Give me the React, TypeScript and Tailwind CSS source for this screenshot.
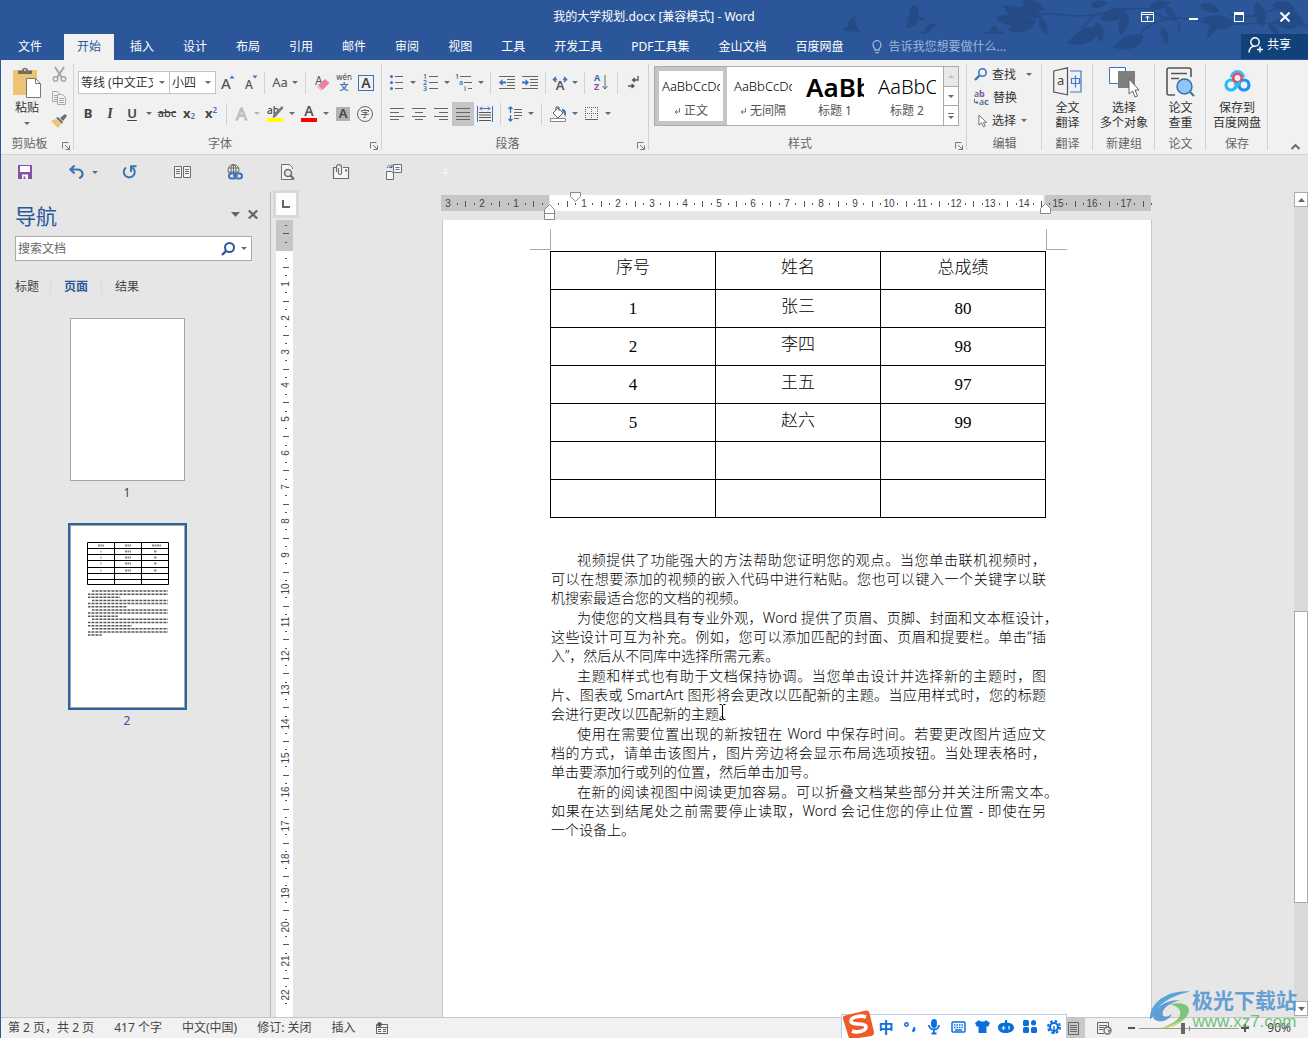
import React from 'react'
import clsx from 'clsx'

type Props = { className?: string; children?: React.ReactNode }

const tabs = ['开始', '插入', '设计', '布局', '引用', '邮件', '审阅', '视图', '工具', '开发工具', 'PDF工具集', '金山文档', '百度网盘']

const header = ['序号', '姓名', '总成绩']
const rows = [
  ['1', '张三', '80'],
  ['2', '李四', '98'],
  ['4', '王五', '97'],
  ['5', '赵六', '99'],
  ['', '', ''],
  ['', '', ''],
]

const paragraphs = [
  ['视频提供了功能强大的方法帮助您证明您的观点。当您单击联机视频时，', '可以在想要添加的视频的嵌入代码中进行粘贴。您也可以键入一个关键字以联', '机搜索最适合您的文档的视频。'],
  ['为使您的文档具有专业外观，Word 提供了页眉、页脚、封面和文本框设计，', '这些设计可互为补充。例如，您可以添加匹配的封面、页眉和提要栏。单击“插', '入”，然后从不同库中选择所需元素。'],
  ['主题和样式也有助于文档保持协调。当您单击设计并选择新的主题时，图', '片、图表或 SmartArt 图形将会更改以匹配新的主题。当应用样式时，您的标题', '会进行更改以匹配新的主题。'],
  ['使用在需要位置出现的新按钮在 Word 中保存时间。若要更改图片适应文', '档的方式，请单击该图片，图片旁边将会显示布局选项按钮。当处理表格时，', '单击要添加行或列的位置，然后单击加号。'],
  ['在新的阅读视图中阅读更加容易。可以折叠文档某些部分并关注所需文本。', '如果在达到结尾处之前需要停止读取，Word 会记住您的停止位置 - 即使在另', '一个设备上。'],
]

const Caret = ({ className = 'text-[#6a6a6a]' }: Props) => (
  <svg width="6" height="3" viewBox="0 0 6 3" className={clsx('shrink-0', className)}>
    <path d="M0 0h6L3 3z" fill="currentColor" />
  </svg>
)

const Tool = ({ className, children, label }: Props & { label: string }) => (
  <button aria-label={label} className={clsx('flex h-6 shrink-0 items-center justify-center', className)}>
    {children}
  </button>
)

const More = ({ className = 'w-2.5' }: Props) => (
  <Tool label="更多" className={className}>
    <Caret />
  </Tool>
)

const Sep = ({ className = 'mx-1' }: Props) => <div className={clsx('h-[22px] w-px shrink-0 bg-[#d2d2d2]', className)} />

const Launcher = () => (
  <button aria-label="更多选项" className="absolute right-1 bottom-1">
    <svg width="8" height="8" viewBox="0 0 8 8" fill="none" stroke="#777">
      <path d="M.5 6.5v-6h6M3 3l4 4M7.5 3.5v4h-4" />
    </svg>
  </button>
)

const Group = ({ title, className, launcher, children }: Props & { title: string; launcher?: boolean }) => (
  <section className={clsx('relative flex shrink-0 flex-col justify-between', className)}>
    <div className="absolute top-1 right-0 bottom-1 w-px bg-[#d2d2d2]" />
    {children}
    <div className="h-5 text-center leading-5 text-[#666]">{title}</div>
    {launcher && <Launcher />}
  </section>
)

const Leaf = ({ x, y, r, s = 1 }: { x: number; y: number; r: number; s?: number }) => (
  <path d="M0 0C6-9 20-9 30 0C20 6 8 8 0 0z" transform={`translate(${x} ${y}) rotate(${r}) scale(${s})`} />
)

const TitleArt = () => (
  <svg width="480" height="60" viewBox="828 0 480 60" className="absolute top-0 right-0" fill="#244b85" aria-hidden="true">
    <path d="M856 15c-6 3-9 8-8 12l-5 1c3 3 8 5 12 3l6 1-4-4c-2-4-2-9-1-13z" />
    <path d="M914 5c-5 3-5 8-5 12l-4-1c1 2 2 3 4 3l-3 9c6 0 10-1 12-8 3 0 6 1 8-1l-8-3c1-5 0-10-4-11zM921 34c1-2 4-3 4-6 3-5 8-4 13-4l-6 5c-1 4-5 5-11 5z" />
    <path d="M985 34h19v-2l-6-1c1-4-3-6-6-4-3 2 0 5-7 5z" />
    <g stroke="#244b85" strokeWidth="1.5" fill="none">
      <path d="M1030 16c25-6 40 3 62-1s30-8 62-6M1140 34c14-16 40-20 62-12s60-4 106 4M1180 22l-2 12M1095 14l-12 14" />
      <path d="M1230 14c24 8 40-4 60-12M1150 9c8 8 20 10 28 12" />
    </g>
    <Leaf x={1035} y={13} r={185} s={1} />
    <Leaf x={1042} y={17} r={205} s={0.7} />
    <Leaf x={1022} y={20} r={185} s={0.9} />
    <Leaf x={1036} y={20} r={160} s={1} />
    <Leaf x={1020} y={12} r={200} s={0.6} />
    <Leaf x={1022} y={2} r={20} s={0.8} />
    <Leaf x={1040} y={18} r={70} s={0.6} />
    <Leaf x={1030} y={4} r={65} s={0.5} />
    <Leaf x={1100} y={28} r={155} s={1.2} />
    <Leaf x={1096} y={22} r={75} s={0.7} />
    <Leaf x={1127} y={9} r={160} s={1} />
    <Leaf x={1126} y={12} r={105} s={0.8} />
    <Leaf x={1090} y={6} r={-10} s={0.6} />
    <Leaf x={1144} y={36} r={160} s={1.1} />
    <Leaf x={1162} y={27} r={75} s={0.6} />
    <Leaf x={1150} y={8} r={-15} s={0.7} />
    <Leaf x={1166} y={6} r={60} s={0.6} />
    <Leaf x={1234} y={24} r={190} s={1.1} />
    <Leaf x={1216} y={22} r={120} s={0.6} />
    <Leaf x={1256} y={2} r={75} s={0.9} />
    <Leaf x={1268} y={24} r={45} s={0.5} />
    <Leaf x={1300} y={24} r={185} s={0.9} />
    <Leaf x={1272} y={5} r={10} s={0.8} />
    <Leaf x={1284} y={10} r={35} s={0.8} />
    <Leaf x={1200} y={5} r={20} s={0.7} />
  </svg>
)

const TitleBar = () => (
  <header className="relative flex h-15 shrink-0 flex-col bg-[#2b579a] text-white">
    <TitleArt />
    <div className="relative flex h-[34px] items-center">
      <div className="flex-1" />
      <h1>我的大学规划.docx [兼容模式] - Word</h1>
      <div className="flex flex-1 justify-end">
        <button aria-label="功能区显示选项" className="flex h-8 w-[46px] items-center justify-center">
          <svg width="13" height="10" viewBox="0 0 13 10" fill="none" stroke="white">
            <path d="M.5.5h12v9H.5zM.5 2.5h12M6.5 8.500V4M4.500 6l2-2 2 2" />
          </svg>
        </button>
        <button aria-label="最小化" className="flex h-8 w-[46px] items-center justify-center">
          <div className="mt-1 h-[2px] w-[9px] bg-white" />
        </button>
        <button aria-label="最大化" className="flex h-8 w-[46px] items-center justify-center">
          <div className="h-[10px] w-[10px] border border-t-[3px] border-white" />
        </button>
        <button aria-label="关闭" className="flex h-8 w-[46px] items-center justify-center">
          <svg width="10" height="10" viewBox="0 0 10 10" stroke="white" strokeWidth="2">
            <path d="M.5.5l9 9M9.500.5l-9 9" />
          </svg>
        </button>
      </div>
    </div>
    <nav className="relative flex h-[26px]">
      <button className="mr-[9px] ml-[5px] px-[13px] pb-px">文件</button>
      <div className="flex gap-[3px]">
        {tabs.map((tab, i) => (
          <button key={tab} className={clsx('px-[13px] pb-px', i === 0 && 'bg-[#f1f1f1] text-[#2b579a]')}>
            {tab}
          </button>
        ))}
      </div>
      <label className="ml-4 flex flex-1 items-center gap-1.5 text-[#9fb5d6]">
        <svg width="10" height="14" viewBox="0 0 10 14" fill="none" stroke="currentColor" strokeWidth="1.3">
          <path d="M3 10C3 8 1 7.500 1 4.700a4 4 0 0 1 8 0C9 7.500 7 8 7 10zM3.200 12.700h3.600" />
        </svg>
        <input placeholder="告诉我您想要做什么..." className="w-40 bg-transparent placeholder:text-[#9fb5d6]" />
      </label>
      <button className="flex h-[25px] w-[67px] items-center gap-1 bg-[#124078] pb-1 pl-[7px]">
        <svg width="15" height="16" viewBox="0 0 15 16" fill="none" stroke="white" strokeWidth="1.4">
          <circle cx="7" cy="5" r="4.200" />
          <path d="M1 15.500c.3-4 2.500-6 5-6.300M12 9.500v6M9 12.500h6" />
        </svg>
        共享
      </button>
    </nav>
  </header>
)

const Clipboard = () => (
  <Group title="剪贴板" launcher className="w-[73px] [&>div:nth-last-child(2)]:pr-4">
    <div className="flex gap-2 pt-[7px] pl-[10px]">
      <button className="flex w-8 flex-col items-center">
        <svg width="30" height="31" viewBox="0 0 30 31">
          <path d="M1 3h24v25H1z" fill="#eec373" />
          <path d="M6 7V3.500h4C10-.3 16-.3 16 3.500h4V7z" fill="#6d6d6d" />
          <circle cx="13" cy="3" r="1.200" fill="#eec373" />
          <path d="M14.500 11.500h9l5 5v14h-14z" fill="white" stroke="#777" />
          <path d="M23.500 11.500v5h5" fill="none" stroke="#777" />
        </svg>
        <span className="leading-5">粘贴</span>
        <Caret className="mt-1 text-[#6a6a6a]" />
      </button>
      <div className="flex flex-col items-center gap-[9px]">
        <button aria-label="剪切">
          <svg width="15" height="15" viewBox="0 0 15 15" fill="none" stroke="#a5a5a5" strokeWidth="1.500">
            <path d="M3 0l6.500 10M12 0L5.500 10" strokeWidth="2" />
            <circle cx="3.500" cy="12" r="2.300" />
            <circle cx="11.500" cy="12" r="2.300" />
          </svg>
        </button>
        <button aria-label="复制">
          <svg width="16" height="14" viewBox="0 0 16 14" fill="#f1f1f1" stroke="#a9a9a9">
            <path d="M1.500.5h5l2 2v8h-7zM3 4.500h3M3 6.500h3M3 8.500h3" />
            <path d="M6.500 3.500h5l3 3v7h-8zM8 7.500h5M8 9.500h5M8 11.500h5" />
          </svg>
        </button>
        <button aria-label="格式刷">
          <svg width="16" height="15" viewBox="0 0 16 15">
            <path d="M0 7l5-2 5 5-3 4z" fill="#eec373" />
            <path d="M5 4l2-1 5 5-1 2zM9 4l5-4 2 2-4 5z" fill="#6d6d6d" />
          </svg>
        </button>
      </div>
    </div>
  </Group>
)

const Combo = ({ label, value, className }: Props & { label: string; value: string }) => (
  <div className={clsx('relative -mr-px h-[23px]', className)}>
    <select aria-label={label} className="h-full w-full appearance-none border border-[#c3c3c3] bg-white pr-4 pl-[2px] text-[#333]">
      <option>{value}</option>
    </select>
    <Caret className="pointer-events-none absolute top-[10px] right-[5px] text-[#6a6a6a]" />
  </div>
)

const FontGroup = () => (
  <Group title="字体" launcher className="w-[308px] [&>div:nth-last-child(2)]:pr-4">
    <div className="pl-1">
      <div className="flex h-[38px] items-center pt-[7px]">
        <Combo label="字体" value="等线 (中文正文)" className="w-[92px]" />
        <Combo label="字号" value="小四" className="mr-0 w-[47px]" />
        <Tool label="增大字号" className="w-6 text-[15px]">
          <svg width="14" height="16" viewBox="0 0 14 16">
            <text x="0" y="14" fontSize="15" fontWeight="500" fill="#555">A</text>
            <path d="M8.500 3.500L11 .5l2.500 3z" fill="#3a74b4" />
          </svg>
        </Tool>
        <Tool label="减小字号" className="w-[22px]">
          <svg width="13" height="16" viewBox="0 0 13 16">
            <text x="0" y="14" fontSize="12" fontWeight="500" fill="#555">A</text>
            <path d="M7.500 .5h5l-2.500 3z" fill="#3a74b4" />
          </svg>
        </Tool>
        <Sep className="mx-[2px]" />
        <Tool label="更改大小写" className="w-9 gap-1 text-[13px] text-[#555]">
          Aa
          <Caret />
        </Tool>
        <Sep className="mx-[2px]" />
        <Tool label="清除格式" className="w-7">
          <svg width="15" height="16" viewBox="0 0 15 16">
            <text x="0" y="10" fontSize="12" fill="#555">A</text>
            <path d="M3 10l7-6 4.500 4-7 7z" fill="#e8819a" />
            <path d="M3 10l4.500 5-2 .5L2 12z" fill="#f4b9c6" />
          </svg>
        </Tool>
        <Tool label="拼音指南" className="w-4">
          <svg width="16" height="17" viewBox="0 0 16 17">
            <text x="8" y="6" fontSize="8" textAnchor="middle" fill="#444">wén</text>
            <text x="8" y="16" fontSize="9" fontWeight="700" textAnchor="middle" fill="#3a74b4">文</text>
          </svg>
        </Tool>
        <Tool label="字符边框" className="w-7">
          <span className="flex h-4 w-4 items-center justify-center border border-[#3a74b4] text-sm font-semibold text-[#444]">A</span>
        </Tool>
      </div>
      <div className="flex h-[31px] items-center text-[13px] text-[#444]">
        <Tool label="加粗" className="w-5 font-bold">B</Tool>
        <Tool label="倾斜" className="w-6 font-serif text-sm font-semibold italic">I</Tool>
        <Tool label="下划线" className="w-5 font-semibold underline underline-offset-2">U</Tool>
        <More className="w-[14px]" />
        <Tool label="删除线" className="w-[22px] text-[11px] font-medium line-through">abc</Tool>
        <Tool label="下标" className="w-[22px] font-bold">
          x<sub className="text-[8px] font-semibold text-[#3a74b4]">2</sub>
        </Tool>
        <Tool label="上标" className="w-[22px] font-bold">
          x<sup className="text-[8px] font-semibold text-[#3a74b4]">2</sup>
        </Tool>
        <Sep />
        <Tool label="文本效果" className="w-5">
          <svg width="15" height="16" viewBox="0 0 15 16">
            <text x="7.500" y="14" fontSize="17" textAnchor="middle" fill="white" stroke="#b5b5b5">A</text>
          </svg>
        </Tool>
        <Tool label="更多" className="w-3">
          <Caret className="text-[#b5b5b5]" />
        </Tool>
        <Tool label="突出显示" className="w-6">
          <svg width="17" height="17" viewBox="0 0 17 17">
            <text x="0" y="9" fontSize="10" fontWeight="500" fill="#444">ab</text>
            <path d="M15 1l1.500 2-8 9-3 1 1-4z" fill="#7a7a7a" />
            <path d="M0 13h16v4H0z" fill="#ffff00" />
          </svg>
        </Tool>
        <More />
        <Tool label="字体颜色" className="w-6">
          <svg width="16" height="17" viewBox="0 0 16 17">
            <text x="8" y="11" fontSize="14" fontWeight="600" textAnchor="middle" fill="#555">A</text>
            <path d="M0 13h16v4H0z" fill="#f00" />
          </svg>
        </Tool>
        <More />
        <Tool label="字符底纹" className="w-6">
          <span className="flex h-[14px] w-[14px] items-center justify-center bg-[#b1b1b1] font-semibold">A</span>
        </Tool>
        <Tool label="带圈字符" className="w-5">
          <span className="flex h-4 w-4 items-center justify-center rounded-full border border-[#666] text-[9px]">字</span>
        </Tool>
      </div>
    </div>
  </Group>
)

const Lines = ({ d }: { d: string }) => (
  <svg width="14" height="12" viewBox="0 0 14 12" stroke="#666">
    <path d={d} />
  </svg>
)

const ParagraphGroup = () => (
  <Group title="段落" launcher className="w-[267px] [&>div:nth-last-child(2)]:pr-4">
    <div className="pl-1">
      <div className="flex h-[38px] items-center pt-[7px]">
        <Tool label="项目符号" className="w-[22px]">
          <svg width="14" height="15" viewBox="0 0 14 15">
            <path d="M5 1.500h8M5 7.500h8M5 13.500h8" stroke="#666" />
            <g fill="#3a74b4">
              <circle cx="1.500" cy="1.500" r="1.500" />
              <circle cx="1.500" cy="7.500" r="1.500" />
              <circle cx="1.500" cy="13.500" r="1.500" />
            </g>
          </svg>
        </Tool>
        <More />
        <Tool label="编号" className="w-6">
          <svg width="15" height="17" viewBox="0 0 15 17">
            <path d="M6 2.500h9M6 8.500h9M6 14.500h9" stroke="#666" />
            <g fontSize="7" fontWeight="600" fill="#3a74b4">
              <text x="0" y="5">1</text>
              <text x="0" y="11">2</text>
              <text x="0" y="17">3</text>
            </g>
          </svg>
        </Tool>
        <More />
        <Tool label="多级列表" className="w-6">
          <svg width="18" height="17" viewBox="0 0 18 17">
            <path d="M5 2.500h11M9 8.500h8M13 14.500h4" stroke="#666" />
            <g fontSize="7" fontWeight="600" fill="#3a74b4">
              <text x="0" y="5">1</text>
              <text x="4" y="11">a</text>
              <text x="9" y="17">i</text>
            </g>
          </svg>
        </Tool>
        <More />
        <Sep />
        <Tool label="减少缩进量" className="w-6">
          <svg width="16" height="13" viewBox="0 0 16 13">
            <path d="M0 .5h16M8 3.500h8M8 6.500h8M8 9.500h8M0 12.500h16" stroke="#666" />
            <path d="M0 6.500L3.500 3v2.500H7v2H3.500V10z" fill="#3a74b4" />
          </svg>
        </Tool>
        <Tool label="增加缩进量" className="w-[22px]">
          <svg width="16" height="13" viewBox="0 0 16 13">
            <path d="M0 .5h16M8 3.500h8M8 6.500h8M8 9.500h8M0 12.500h16" stroke="#666" />
            <path d="M7 6.500L3.500 3v2.500H0v2h3.500V10z" fill="#3a74b4" />
          </svg>
        </Tool>
        <Sep />
        <Tool label="中文版式" className="w-5">
          <svg width="16" height="14" viewBox="0 0 16 14">
            <text x="8" y="14" fontSize="13" fontWeight="600" textAnchor="middle" fill="#555">A</text>
            <path d="M4 1L1.500 3.500 4 6M12 1l2.500 2.500L12 6M1 3.500h4M11 3.500h4" fill="none" stroke="#3a74b4" strokeWidth="1.500" />
          </svg>
        </Tool>
        <More />
        <Sep />
        <Tool label="排序" className="w-6">
          <svg width="14" height="17" viewBox="0 0 14 17">
            <text x="0" y="7" fontSize="9" fontWeight="700" fill="#3a74b4">A</text>
            <text x="0" y="16" fontSize="9" fontWeight="700" fill="#8850aa">Z</text>
            <path d="M11 1v14M8.500 12l2.500 3 2.500-3" fill="none" stroke="#666" />
          </svg>
        </Tool>
        <Sep />
        <Tool label="显示编辑标记" className="w-[22px]">
          <svg width="11" height="13" viewBox="0 0 11 13" fill="none" stroke="#555" strokeWidth="1.300">
            <path d="M10 0v4H5M7 2L4.500 4 7 6M0 10h5M3.500 8L6 10l-2.500 2" />
          </svg>
        </Tool>
      </div>
      <div className="flex h-[31px] items-center">
        <Tool label="左对齐" className="w-[22px]"><Lines d="M0 .5h14M0 4.500h9M0 8.500h14M0 11.500h9" /></Tool>
        <Tool label="居中" className="w-[22px]"><Lines d="M0 .5h14M3 4.500h8M0 8.500h14M3 11.500h8" /></Tool>
        <Tool label="右对齐" className="w-[22px]"><Lines d="M0 .5h14M5 4.500h9M0 8.500h14M5 11.500h9" /></Tool>
        <Tool label="两端对齐" className="w-[22px] bg-[#c5c5c5]"><Lines d="M0 .5h14M0 4.500h14M0 8.500h14M0 11.500h14" /></Tool>
        <Tool label="分散对齐" className="w-[22px]">
          <svg width="16" height="16" viewBox="0 0 16 16" fill="none">
            <path d="M.5 0v16M15.500 0v16M3 2.500h10M5 .5l-2 2 2 2M11 .5l2 2-2 2" stroke="#3a74b4" />
            <path d="M2 6.500h12M2 9h12M2 11.500h12M2 14.500h12" stroke="#555" />
          </svg>
        </Tool>
        <Sep />
        <Tool label="行距" className="w-5">
          <svg width="15" height="16" viewBox="0 0 15 16" fill="none">
            <path d="M2.500 1v6M2.500 9v6M.5 3l2-2 2 2M.5 13l2 2 2-2" stroke="#3a74b4" strokeWidth="1.300" />
            <path d="M6 3.500h8M6 6.500h8M6 9.500h8M6 12.500h5" stroke="#666" />
          </svg>
        </Tool>
        <More className="w-3" />
        <Sep />
        <Tool label="底纹" className="w-6">
          <svg width="17" height="16" viewBox="0 0 17 16">
            <path d="M3 7l5-5 5 5-5 5z" fill="white" stroke="#666" />
            <path d="M6 4V1h3v4" fill="none" stroke="#666" />
            <path d="M12 3c4 0 5 4 3 8-1-3-1-5-3-6z" fill="#3a74b4" />
            <path d="M.5 12.500h15v3H.5z" fill="white" stroke="#888" />
          </svg>
        </Tool>
        <More />
        <Tool label="边框" className="w-[22px]">
          <svg width="13" height="13" viewBox="0 0 13 13" stroke="#666">
            <path d="M0 .5h13M0 6.500h13M.5 0v12M6.500 0v12M12.500 0v12" strokeDasharray="1 1" />
            <path d="M0 12.500h13" />
          </svg>
        </Tool>
        <More className="w-3" />
      </div>
    </div>
  </Group>
)

const StyleCard = ({ preview, name, size, active, mark }: { preview: string; name: string; size: string; active?: boolean; mark?: boolean }) => (
  <button className={clsx('flex h-[58px] w-[72px] flex-col items-center justify-end border-4 bg-white px-[3px]', active ? 'border-[#c5c5c5]' : 'border-white')}>
    <span className={clsx('flex h-7 w-full items-center overflow-hidden whitespace-nowrap text-black', size)}>{preview}</span>
    <span className="flex items-center gap-1 leading-5 text-[#555]">
      {mark && (
        <svg width="6" height="6" viewBox="0 0 6 6" fill="none" stroke="#777">
          <path d="M5.500 0v4h-4M3 2L1 4l2 2" />
        </svg>
      )}
      {name}
    </span>
  </button>
)

const StylesGroup = () => (
  <Group title="样式" launcher className="w-[318px] [&>div:nth-last-child(2)]:pr-4">
    <div className="mt-[6px] ml-[5px] flex h-15 w-[305px] border border-[#ababab] bg-white">
      <StyleCard preview="AaBbCcDd" name="正文" size="text-[13px] font-light" active mark />
      <StyleCard preview="AaBbCcDd" name="无间隔" size="text-[13px] font-light" mark />
      <StyleCard preview="AaBb" name="标题 1" size="text-[26px] font-semibold" />
      <StyleCard preview="AaBbC" name="标题 2" size="text-xl font-light" />
      <div className="ml-auto flex w-[15px] flex-col divide-y divide-[#ababab] border-l border-[#ababab]">
        <button aria-label="上一行" className="flex flex-1 items-center justify-center bg-[#e9e9e9]">
          <Caret className="rotate-180 text-[#c0c0c0]" />
        </button>
        <button aria-label="下一行" className="flex flex-1 items-center justify-center"><Caret /></button>
        <button aria-label="其他样式" className="flex flex-1 flex-col items-center justify-center gap-[2px]">
          <div className="h-px w-[6px] bg-[#6a6a6a]" />
          <Caret />
        </button>
      </div>
    </div>
  </Group>
)

const Arrow = ({ w = 10, h = 15 }: { w?: number; h?: number }) => (
  <svg width={w} height={h} viewBox="0 0 10 15">
    <path d="M1 1v11l3-2.500 2 4.500 2-1-2-4h3.500z" fill="white" stroke="#666" />
  </svg>
)

const EditGroup = () => (
  <Group title="编辑" className="w-[75px]">
    <div className="flex flex-col pt-[3px] pl-[7px]">
      <button className="flex h-[23px] items-center gap-1">
        <svg width="14" height="13" viewBox="0 0 14 13" fill="none" stroke="#3a74b4">
          <circle cx="8.500" cy="4.500" r="3.700" strokeWidth="1.600" />
          <path d="M5.500 7.500L1 12" strokeWidth="2.400" />
        </svg>
        查找
        <Caret className="ml-[6px] text-[#6a6a6a]" />
      </button>
      <button className="flex h-[23px] items-center gap-[3px]">
        <svg width="16" height="16" viewBox="0 0 16 16" fontSize="9">
          <text x="0" y="7" fill="#444">a</text>
          <text x="5" y="7" fontWeight="700" fill="#8850aa">b</text>
          <text x="5" y="15" fill="#444">a</text>
          <text x="10" y="15" fontWeight="700" fill="#3a74b4">c</text>
          <path d="M.5 9v3.500H4M2.500 11L4 12.500 2.500 14" fill="none" stroke="#3a74b4" />
        </svg>
        替换
      </button>
      <button className="flex h-[23px] items-center gap-[5px] pl-1">
        <Arrow w={9} h={14} />
        选择
        <Caret className="text-[#6a6a6a]" />
      </button>
    </div>
  </Group>
)

const BigButton = ({ lines, children }: Props & { lines: string[] }) => (
  <button className="flex flex-col items-center pt-[7px]">
    <span className="flex h-[33px] items-start">{children}</span>
    {lines.map((line) => (
      <span key={line} className="leading-[15px] whitespace-nowrap">{line}</span>
    ))}
  </button>
)

const Ribbon = () => (
  <div className="flex h-[95px] shrink-0 overflow-hidden border-b border-[#d2d2d2] bg-[#f1f1f1]">
    <Clipboard />
    <FontGroup />
    <ParagraphGroup />
    <StylesGroup />
    <EditGroup />
    <Group title="翻译" className="w-[51px]">
      <BigButton lines={['全文', '翻译']}>
        <svg width="29" height="29" viewBox="0 0 29 29" fill="none">
          <path d="M.7 4L14.500.8v27L.7 25z" stroke="#555" strokeWidth="1.200" />
          <path d="M17 4h11v21H17M18.500 11.500h8v5h-8zM22.500 8.500v12" stroke="#3f78cf" strokeWidth="1.200" />
          <text x="4" y="18" fontSize="13" fill="#444">a</text>
        </svg>
      </BigButton>
    </Group>
    <Group title="新建组" className="w-[62px]">
      <BigButton lines={['选择', '多个对象']}>
        <svg width="30" height="31" viewBox="0 0 30 31">
          <path d="M.5.5h16v16H.5z" fill="white" stroke="#3a74b4" />
          <path d="M9 4h17v17H9z" fill="#7f7f7f" />
          <path d="M20 12v15l3.500-3 2.500 6 2.500-1-2.500-6h4z" fill="white" stroke="#666" />
        </svg>
      </BigButton>
    </Group>
    <Group title="论文" className="w-[51px]">
      <BigButton lines={['论文', '查重']}>
        <svg width="29" height="30" viewBox="0 0 29 30" fill="none">
          <path d="M9 28H3a2 2 0 0 1-2-2V3a2 2 0 0 1 2-2h20a2 2 0 0 1 2 2v7M5 6.500h16M5 11.500h8" stroke="#555" strokeWidth="1.600" />
          <circle cx="18.500" cy="19.500" r="7.500" fill="#91c4f7" stroke="#29719f" strokeWidth="1.400" />
          <path d="M24 25l4 4" stroke="#29719f" strokeWidth="2" />
        </svg>
      </BigButton>
    </Group>
    <Group title="保存" className="w-[62px]">
      <BigButton lines={['保存到', '百度网盘']}>
        <svg width="27" height="26" viewBox="0 0 27 26" fill="none" strokeWidth="3.200">
          <circle cx="7" cy="18" r="5" stroke="#2bbcf5" />
          <circle cx="20" cy="18" r="5" stroke="#1593fb" />
          <path d="M7.500 10.500a6 6 0 0 1 12 0" stroke="#2fc4f4" />
          <circle cx="13.500" cy="11" r="4.200" stroke="#f0486b" strokeWidth="2.600" />
          <path d="M15 13l5 8" stroke="#f1f1f1" strokeWidth="0" />
          <path d="M10.500 21.500l6-7" stroke="#2bbcf5" />
        </svg>
      </BigButton>
    </Group>
    <button aria-label="折叠功能区" className="mt-auto mr-2 mb-1 ml-auto">
      <svg width="9" height="6" viewBox="0 0 9 6" fill="none" stroke="#666" strokeWidth="1.800">
        <path d="M.5 5l4-4 4 4" />
      </svg>
    </button>
  </div>
)

const QuickAccess = () => (
  <div className="flex h-[35px] shrink-0 items-center pb-px pl-[10px]">
    <Tool label="保存" className="w-7">
      <svg width="14" height="14" viewBox="0 0 14 14">
        <path d="M0 0h14v14H0z" fill="#8850aa" />
        <path d="M2 1h10v6H2zM4 9.500h6V14H7.500v-2.500h-2V14H4z" fill="white" />
      </svg>
    </Tool>
    <Tool label="撤消" className="ml-[23px] w-7">
      <svg width="15" height="14" viewBox="0 0 15 14" fill="none" stroke="#3a74b4" strokeWidth="2.200">
        <path d="M5.500.5L1.500 4.500l4 4M2 4.500h6c7 0 7 8 2 8.500" />
      </svg>
    </Tool>
    <More />
    <div className="ml-[15px] flex gap-[25px]">
      <Tool label="重复" className="w-7">
        <svg width="15" height="14" viewBox="0 0 15 14" fill="none" stroke="#3a74b4" strokeWidth="2">
          <path d="M4 2.500a5.500 5.500 0 1 0 6.500 0M9 7V1.200h5.500" />
        </svg>
      </Tool>
      <Tool label="双栏阅读" className="w-7">
        <svg width="17" height="12" viewBox="0 0 17 12" fill="#f4f4f4" stroke="#6d6d6d">
          <path d="M.5.5h7v11h-7zM9.500.5h7v11h-7zM2 3.500h4M2 5.500h4M2 7.500h4M11 3.500h4M11 5.500h4M11 7.500h4" />
        </svg>
      </Tool>
      <Tool label="超链接" className="w-7">
        <svg width="16" height="16" viewBox="0 0 16 16" fill="none">
          <g stroke="#6d6d6d">
            <circle cx="6.500" cy="6" r="5.500" />
            <ellipse cx="6.500" cy="6" rx="2.500" ry="5.500" />
            <path d="M1 4h11M1 8h11M6.500.5v11" />
          </g>
          <g stroke="#3a74b4" strokeWidth="2" fill="#e6e6e6">
            <rect x="2" y="9.500" width="7" height="5" rx="2.500" />
            <rect x="8" y="9.500" width="7" height="5" rx="2.500" />
          </g>
          <path d="M6 12h5" stroke="#3a74b4" strokeWidth="1.600" />
        </svg>
      </Tool>
      <Tool label="打印预览" className="w-7">
        <svg width="14" height="17" viewBox="0 0 14 17" fill="none" stroke="#6d6d6d">
          <path d="M11.500 5V3.500l-3-3h-8v15h11V14" fill="#f6f6f6" />
          <circle cx="7" cy="9" r="3.500" strokeWidth="1.600" fill="#e6e6e6" />
          <path d="M9.500 11.500l3.500 4" strokeWidth="2.200" />
        </svg>
      </Tool>
      <Tool label="电子邮件" className="w-7">
        <svg width="17" height="16" viewBox="0 0 17 16" fill="none" stroke="#6d6d6d">
          <path d="M3 3.500H.5v11h15v-11H10" fill="#f6f6f6" strokeWidth="1.200" />
          <path d="M3.500 8V3a2.500 2.500 0 0 1 5 0v6a1.500 1.500 0 0 1-3 0V4" strokeWidth="1.200" />
          <path d="M12 5.500h2v2h-2z" fill="#3a74b4" stroke="none" />
        </svg>
      </Tool>
      <Tool label="切换窗口" className="w-7">
        <svg width="16" height="16" viewBox="0 0 16 16" fill="#f6f6f6" stroke="#6d6d6d">
          <path d="M.5 7.500h5l2 2v6h-7zM7.500.5h8v8h-8zM9.500 3.500h4M9.500 5.500h4" />
          <path d="M1 4c1-3 3-3 5-1M6 .5v3H3" fill="none" stroke="#3a74b4" />
        </svg>
      </Tool>
      <Tool label="自定义快速访问工具栏" className="w-6">
        <svg width="5" height="6" viewBox="0 0 5 6" fill="#f6f6f6">
          <path d="M0 0h5v1H0zM0 3h5L2.500 6z" />
        </svg>
      </Tool>
    </div>
  </div>
)

// miniature of page 2: grid plus a dashed stroke for each line of text
const PageMiniature = () => (
  <svg width="113" height="181" viewBox="0 0 113 181" aria-hidden="true">
    <path d="M16.500 16.500h81v42h-81zM43.500 16.500v42M70.500 16.500v42M16.500 22.500h81M16.500 28.500h81M16.500 34.500h81M16.500 41.500h81M16.500 47.500h81M16.500 53.500h81" fill="none" stroke="black" />
    <g stroke="#888" strokeWidth="2">
      <path d="M27 19.500h6M54 19.500h6M81 19.500h9" strokeDasharray="2 .5" />
      {[25, 31, 37, 44].map((y) => (
        <path key={y} d={`M29.500 ${y}.5h1M54 ${y}.5h6M83 ${y}.5h3`} strokeDasharray="2 .5" />
      ))}
    </g>
    <g stroke="#555" strokeWidth="1.500" strokeDasharray="2 .6 1 .4">
      {paragraphs.map((lines, p) =>
        lines.map((line, i) => {
          const y = 65 + (p * 3 + i) * 3.15
          const end = i < 2 ? 97 : 17 + line.length * 2.3
          return <path key={line} d={`M${i === 0 ? 21 : 17} ${y}H${end}`} />
        }),
      )}
    </g>
  </svg>
)

const Navigation = () => (
  <aside className="mt-[2px] flex w-[270px] shrink-0 flex-col border-r border-[#bcbcbc] pr-[18px] pl-[14px]">
    <div className="-mr-[6px] flex h-[44px] items-center text-[#666]">
      <h2 className="flex-1 pt-1 text-[21px] text-[#2b579a]">导航</h2>
      <button aria-label="任务窗格选项">
        <svg width="9" height="5" viewBox="0 0 9 5"><path d="M0 0h9L4.500 5z" fill="currentColor" /></svg>
      </button>
      <button aria-label="关闭导航" className="pl-2">
        <svg width="10" height="9" viewBox="0 0 10 9" stroke="currentColor" strokeWidth="2.200"><path d="M.8.5l8.400 8M9.200.5l-8.400 8" /></svg>
      </button>
    </div>
    <div className="flex h-[25px] items-center border border-[#ababab] bg-white pr-1">
      <input aria-label="搜索文档" placeholder="搜索文档" className="min-w-0 flex-1 pl-[2px] placeholder:text-[#666]" />
      <button aria-label="搜索">
        <svg width="14" height="14" viewBox="0 0 14 14" fill="none" stroke="#2b579a">
          <circle cx="8.500" cy="5.500" r="4.500" strokeWidth="2" />
          <path d="M5 9l-4 4" strokeWidth="2.400" />
        </svg>
      </button>
      <button aria-label="搜索选项" className="pl-[6px]"><Caret /></button>
    </div>
    <div className="mt-4 flex h-5 items-center divide-x divide-[#dcdcdc] text-[#444]">
      <button className="pr-[11px]">标题</button>
      <button className="px-[13px] font-bold text-[#2b579a]">页面</button>
      <button className="px-[13px]">结果</button>
    </div>
    <div className="mt-[21px] flex w-[224px] flex-col items-center">
      <button aria-label="第 1 页" className="h-[163px] w-[115px] border border-[#a0a6ae] bg-white" />
      <span className="leading-6 text-[#444]">1</span>
      <button aria-label="第 2 页" className="mt-[18px] h-[187px] w-[119px] border-2 border-[#2b629f] bg-white">
        <div className="h-[183px] w-[115px] border border-[#a6a6a6]"><PageMiniature /></div>
      </button>
      <span className="leading-[22px] text-[#2b579a]">2</span>
    </div>
  </aside>
)

const UNIT = 33.86

const HorizontalRuler = () => {
  const zero = 109
  const quarters = Array.from({ length: 84 }, (_, i) => i - 12)
  return (
    <svg width="712" height="30" viewBox="0 0 712 30" className="mx-auto shrink-0">
      <path d="M0 5h108v16H0zM604 5h106v16H604z" fill="#c6c6c6" />
      <path d="M109 5h493v16H109z" fill="white" />
      <g fill="#555" shapeRendering="crispEdges">
        {quarters.map((q) => {
          const x = Math.round(zero + (q * UNIT) / 4)
          if (q % 4 === 0 || x > 710) return null
          return q % 2 === 0 ? <rect key={q} x={x} y={11} width={1} height={6} /> : <rect key={q} x={x} y={13} width={1} height={2} />
        })}
      </g>
      <g fontSize="10" fill="#444" textAnchor="middle" className="font-['Liberation_Sans']">
        {Array.from({ length: 21 }, (_, i) => i - 3).filter((n) => n !== 0 && n < 18).map((n) => (
          <text key={n} x={Math.round(zero + n * UNIT)} y="17">{Math.abs(n)}</text>
        ))}
      </g>
      <g fill="white" stroke="#888">
        <path d="M129.500 2.500h10v4l-5 5-5-5z" />
        <path d="M103.500 29.500v-10l5-5 5 5v10zM103.500 23.500h10" />
        <path d="M599.500 23.500v-5l5-5 5 5v5z" />
      </g>
    </svg>
  )
}

const VerticalRuler = () => {
  const zero = 30
  return (
    <div className="flex w-[29px] shrink-0 flex-col overflow-hidden">
      <button aria-label="制表符" className="ml-[2px] flex h-7 w-[26px] shrink-0 items-center justify-center border-3 border-[#d9d9d9] bg-[#fdfdfd]">
        <svg width="8" height="8" viewBox="0 0 8 8" fill="none" stroke="#666" strokeWidth="2"><path d="M1 0v7h7" /></svg>
      </button>
      <div className="mt-[2px] ml-[5px] min-h-0 w-[17px] flex-1 overflow-hidden bg-white">
        <svg width="17" height="797" viewBox="0 0 17 797">
          <path d="M0 0h17v31H0z" fill="#c6c6c6" />
          <g fill="#555" shapeRendering="crispEdges">
            {Array.from({ length: 93 }, (_, i) => i - 3).map((q) => {
              const y = Math.round(zero + (q * UNIT) / 4)
              if (q % 4 === 0) return null
              return q % 2 === 0 ? <rect key={q} x={7} y={y} width={6} height={1} /> : <rect key={q} x={9} y={y} width={2} height={1} />
            })}
          </g>
          <g fontSize="10" fill="#444" textAnchor="middle" className="font-['Liberation_Sans']">
            {Array.from({ length: 22 }, (_, i) => i + 1).map((n) => (
              <text key={n} transform={`translate(13 ${Math.round(zero + n * UNIT)}) rotate(-90)`}>{n}</text>
            ))}
          </g>
        </svg>
      </div>
    </div>
  )
}

const TextCursor = () => (
  <span className="relative">
    <svg width="7" height="16" viewBox="0 0 7 16" fill="none" stroke="black" className="absolute top-0 left-0">
      <path d="M.5.5h2l1 1 1-1h2M3.500 1v14M.5 15.500h2l1-1 1 1h2" />
    </svg>
  </span>
)

const Document = () => (
  <main className="flex min-w-0 flex-1 flex-col overflow-hidden">
    <HorizontalRuler />
    <article className="mx-auto w-[710px] flex-1 border-x border-[#c6c6c6] bg-white pt-[9px] text-black">
      <div className="flex justify-between pr-[84px] pl-[87px]">
        <div className="h-[21px] w-[21px] border-r border-b border-[#ababab]" />
        <div className="h-[21px] w-[21px] border-b border-l border-[#ababab]" />
      </div>
      <div className="mt-px pr-[105px] pl-[107px]">
        <table className="w-full table-fixed border-collapse text-center font-['Liberation_Serif','Noto_Sans_CJK_SC',serif] text-[17px] leading-6 font-light">
          <thead>
            <tr className="h-[38px]">
              {header.map((cell) => (
                <th key={cell} className="border border-black pt-1 align-top font-light">{cell}</th>
              ))}
            </tr>
          </thead>
          <tbody>
            {rows.map((row, i) => (
              <tr key={i} className="h-[38px]">
                {row.map((cell, j) => (
                  <td key={j} className={clsx('border border-black', j === 1 && 'pb-1')}>{cell}</td>
                ))}
              </tr>
            ))}
          </tbody>
        </table>
        <div className="mt-8 flex flex-col gap-px pl-px text-sm leading-[19px] font-light">
          {paragraphs.map((lines, p) => (
            <p key={p}>
              {lines.map((line, i) => (
                <span
                  key={line}
                  className={clsx(
                    'block whitespace-nowrap',
                    i === 0 && 'pl-[26px]',
                    i < 2 && '[text-align-last:justify]',
                    i === 0 && (p === 1 || p === 4) && '-mr-3',
                  )}
                >
                  {p === 2 && i === 2 ? <>{line.slice(0, -1)}<TextCursor />。</> : line}
                </span>
              ))}
            </p>
          ))}
        </div>
      </div>
    </article>
  </main>
)

const ScrollBar = () => (
  <div className="mt-[2px] mb-px flex w-[14px] shrink-0 flex-col bg-[#dadada]">
    <button aria-label="向上滚动" className="flex h-[15px] items-center justify-center border border-[#ababab] bg-white">
      <svg width="7" height="4" viewBox="0 0 7 4"><path d="M0 4h7L3.500 0z" fill="#666" /></svg>
    </button>
    <div className="flex-[405]" />
    <div className="flex-[290] border border-[#ababab] bg-white" />
    <div className="flex-[98]" />
    <button aria-label="向下滚动" className="flex h-[15px] items-center justify-center border border-[#ababab] bg-white">
      <svg width="7" height="4" viewBox="0 0 7 4"><path d="M0 0h7L3.500 4z" fill="#666" /></svg>
    </button>
  </div>
)

const StatusBar = () => (
  <footer className="flex h-[21px] shrink-0 items-center border-t border-[#c6c6c6] bg-[#f1f1f1] pr-[17px] pl-[7px] text-[#444]">
    <div className="flex flex-1 items-center gap-5">
      <span>第 2 页，共 2 页</span>
      <span>417 个字</span>
      <span>中文(中国)</span>
      <span>修订: 关闭</span>
      <span>插入</span>
      <svg width="13" height="12" viewBox="0 0 13 12" fill="none" stroke="#666">
        <path d="M.5 2.500h11v9H.5zM.5 5.500h11M2 7.500h3M2 9.500h3M7 7.500h3M7 9.500h3" />
        <circle cx="3.500" cy="2.500" r="2" fill="#555" />
      </svg>
    </div>
    <button aria-label="页面视图" className="flex h-full w-6 items-center justify-center bg-[#c8c8c8]">
      <svg width="11" height="13" viewBox="0 0 11 13" fill="none" stroke="#666">
        <path d="M.5.5h10v12H.5zM2 3.500h7M2 5.500h7M2 7.500h7M2 9.500h7" />
      </svg>
    </button>
    <button aria-label="Web 版式视图" className="flex w-[38px] justify-center">
      <svg width="15" height="13" viewBox="0 0 15 13" fill="none" stroke="#666">
        <path d="M7 11.500H.5V.5h11V5M2 3.500h8M2 5.500h5M2 7.500h4" />
        <circle cx="10.500" cy="8.500" r="3.500" fill="#f1f1f1" strokeWidth="1.300" />
        <path d="M8 7l3 1 .5 3 2-3z" fill="#666" stroke="none" />
      </svg>
    </button>
    <button aria-label="缩小" className="flex w-4 justify-center"><div className="h-[2px] w-[7px] bg-[#555]" /></button>
    <div className="relative flex w-[100px] items-center">
      <div className="absolute left-[50px] h-[5px] w-px bg-[#888]" />
      <input
        type="range"
        aria-label="显示比例"
        defaultValue={44}
        className="relative h-3 w-full appearance-none bg-transparent [&::-webkit-slider-runnable-track]:h-px [&::-webkit-slider-runnable-track]:bg-[#999] [&::-webkit-slider-thumb]:-mt-[5px] [&::-webkit-slider-thumb]:h-[11px] [&::-webkit-slider-thumb]:w-1 [&::-webkit-slider-thumb]:appearance-none [&::-webkit-slider-thumb]:bg-[#666]"
      />
    </div>
    <button aria-label="放大" className="flex w-3 justify-center">
      <svg width="8" height="8" viewBox="0 0 8 8" stroke="#555" strokeWidth="2"><path d="M0 4h8M4 0v8" /></svg>
    </button>
    <button className="w-10 text-right">90%</button>
  </footer>
)

// floating input method bar, sits over the status bar
const InputMethodBar = () => (
  <div className="absolute right-[241px] bottom-0 flex h-6 w-[226px] border border-b-0 border-[#b5cde8] bg-white pl-8 text-[#0a6fdc] [&>button]:flex [&>button]:w-6 [&>button]:items-center [&>button]:justify-center">
    <svg width="32" height="28" viewBox="0 0 32 28" className="absolute bottom-0 left-0">
      <path d="M3 5.500L24 .5q3-.5 3.500 2.500L32 22q.5 3-2.500 4L10 29q-3 .5-3.500-2.500L1 9q-.5-3 2-3.500z" fill="#f05a28" />
      <path d="M24 7c-6-2-15 0-15 4 0 5 15 1 15 6 0 4-9 6-14 4" fill="none" stroke="white" strokeWidth="3.600" />
    </svg>
    <button className="text-[15px] font-bold">中</button>
    <button aria-label="标点">
      <svg width="12" height="12" viewBox="0 0 12 12" fill="none" stroke="currentColor"><circle cx="2.500" cy="3.500" r="1.700" strokeWidth="1.500" /><path d="M9.500 6.500c1.500 1 .5 3-1 4" strokeWidth="2.500" /></svg>
    </button>
    <button aria-label="语音">
      <svg width="12" height="15" viewBox="0 0 12 15" fill="none" stroke="currentColor" strokeWidth="1.800"><rect x="4" y="1" width="4" height="7" rx="2" fill="currentColor" /><path d="M1 6c0 6 10 6 10 0M6 11v4M3.500 14.500h5" /></svg>
    </button>
    <button aria-label="键盘">
      <svg width="15" height="12" viewBox="0 0 15 12" fill="none" stroke="currentColor" strokeWidth="1.500"><rect x="1" y="1" width="13" height="10" rx="1" /><path d="M3 4h9M3 6.500h9" strokeDasharray="1.500 1" /><path d="M4 9h7" /></svg>
    </button>
    <button aria-label="皮肤">
      <svg width="15" height="13" viewBox="0 0 15 13" fill="currentColor"><path d="M4 0c1 2 6 2 7 0l4 3-2 4-1.500-1v7h-8V6L2 7 0 3z" /></svg>
    </button>
    <button aria-label="助手">
      <svg width="16" height="13" viewBox="0 0 16 13" fill="currentColor"><path d="M7 0h2v2.500c4 .3 7 2 7 5S13 13 8 13s-8-2-8-5.500 3-4.700 7-5z" /><path d="M3.500 8h4M5.500 6v4M11 6v3.500" stroke="white" strokeWidth="1.200" /></svg>
    </button>
    <button aria-label="工具箱">
      <svg width="14" height="13" viewBox="0 0 14 13" fill="currentColor"><rect width="6" height="6" rx="1.500" /><rect x="8" y="0" width="5" height="5.500" rx="2.500" /><rect y="7" width="6" height="6" rx="1.500" /><rect x="8" y="7" width="6" height="6" rx="1.500" /></svg>
    </button>
    <button aria-label="设置">
      <svg width="14" height="14" viewBox="0 0 14 14" fill="none" stroke="currentColor"><circle cx="7" cy="7" r="4" strokeWidth="2.200" /><circle cx="7" cy="7" r="6" strokeWidth="2" strokeDasharray="2.600 2.100" /><path d="M7 6v8" strokeWidth="1.500" /></svg>
    </button>
  </div>
)

const SiteBadge = () => (
  <div className="pointer-events-none absolute right-[11px] bottom-[6px] flex items-center opacity-85">
    <svg width="43" height="40" viewBox="0 0 44 40">
      <path d="M42 1C20-1 0 12 1 30c3-4 6-4 6-4C7 14 22 6 42 1z" fill="#3e9bd8" />
      <path d="M5 29c-1-12 14-20 27-19-9 2-19 8-18 14 0 4 6 3 9 0-1 6-12 11-18 5z" fill="#4a8fd0" />
      <path d="M22 14c12-3 22 1 18 10-4 8-16 15-28 15 12-5 20-9 20-16 0-5-4-7-10-9z" fill="#6cbf6a" />
      <path d="M12 39c10 0 21-5 26-11-6 4-16 8-26 11z" fill="#c8dc62" />
    </svg>
    <div className="flex flex-col items-center">
      <span className="text-[21px] leading-6 font-bold text-[#4f93d2]">极光下载站</span>
      <span className="font-['Liberation_Sans',sans-serif] text-[17px] leading-5 text-[#59b96a]">www.xz7.com</span>
    </div>
  </div>
)

const App = () => {
  return (
    <div className="relative flex h-screen flex-col overflow-hidden bg-[#e6e6e6] font-['Noto_Sans','Noto_Sans_CJK_SC',sans-serif] text-xs text-[#333] [&_svg]:overflow-visible">
      <TitleBar />
      <div className="flex min-h-0 flex-1 flex-col border-l border-[#2b579a]">
        <Ribbon />
        <QuickAccess />
        <div className="flex min-h-0 flex-1">
          <Navigation />
          <VerticalRuler />
          <Document />
          <ScrollBar />
        </div>
        <StatusBar />
      </div>
      <InputMethodBar />
      <SiteBadge />
    </div>
  )
}

export default App
